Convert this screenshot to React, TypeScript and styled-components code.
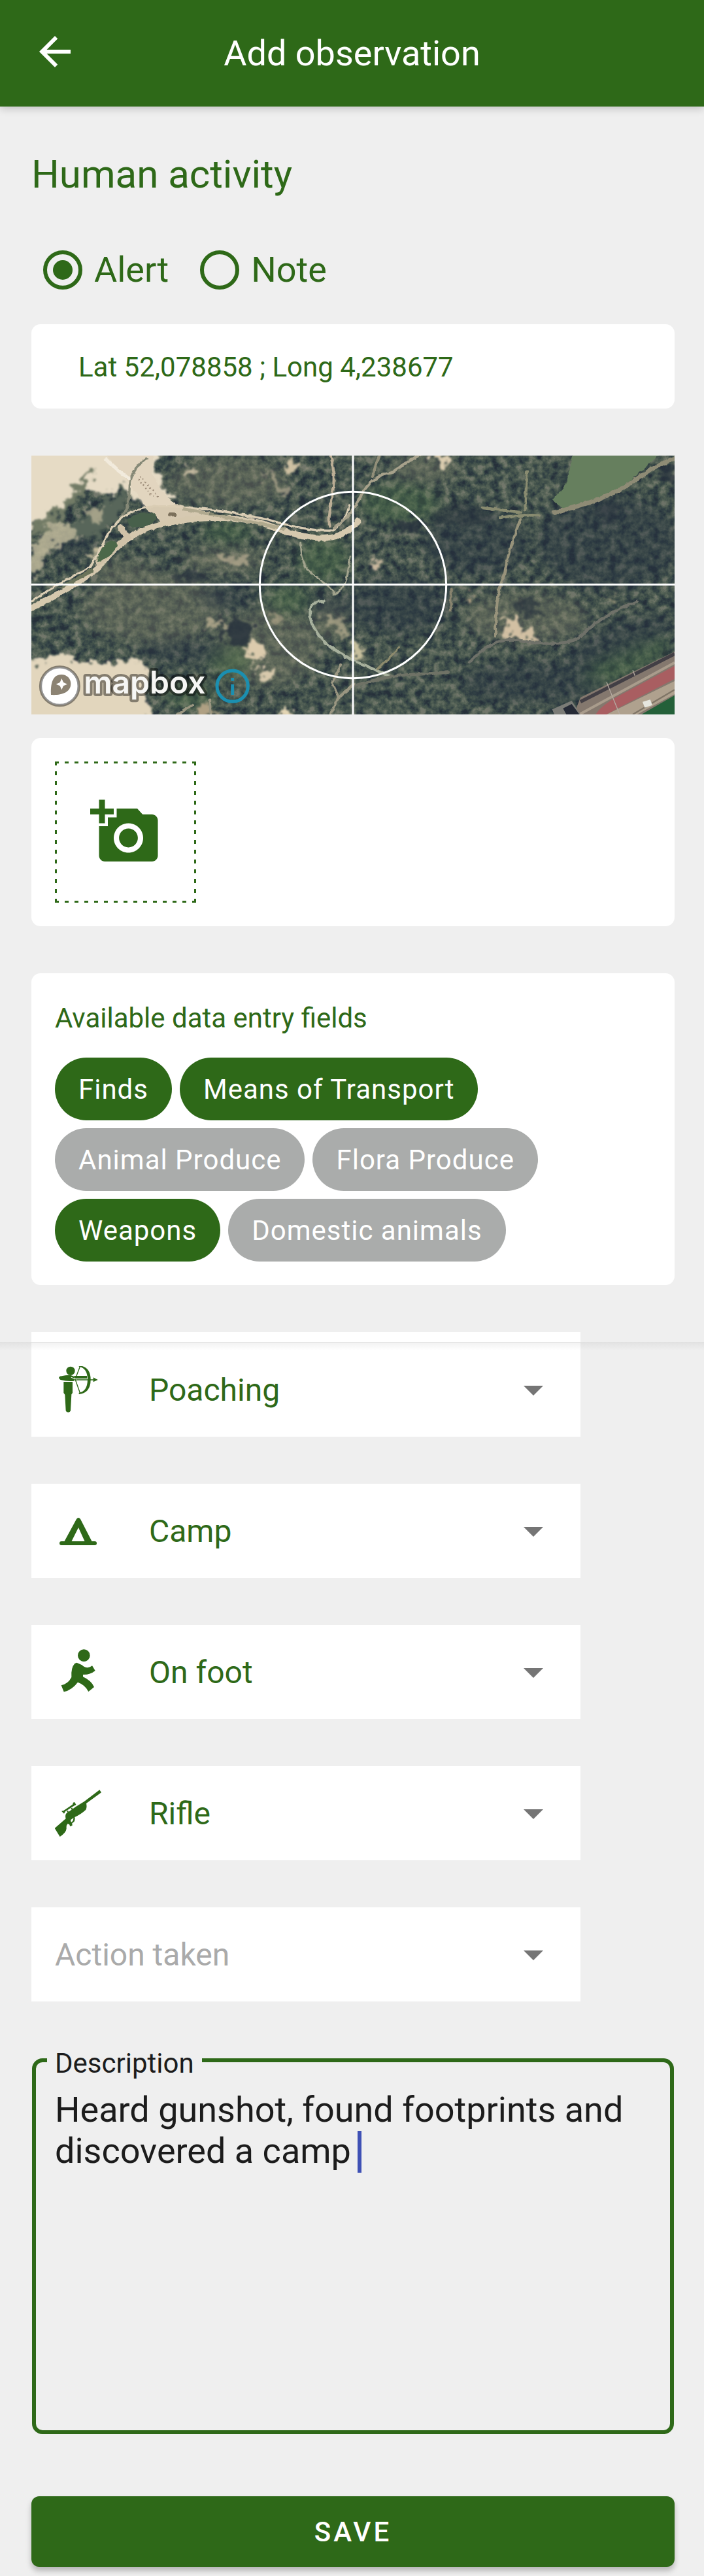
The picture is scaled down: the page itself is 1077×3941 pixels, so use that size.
import React from "react";
import styled, { createGlobalStyle } from "styled-components";
import { MdAddAPhoto, MdArrowBack, MdArrowDropDown } from "react-icons/md";

const green = "#2e6918";
const grey = "#aaacab";
const page = "#efefef";

const GlobalStyle = createGlobalStyle`
  *, *::before, *::after { box-sizing: border-box; }
  body {
    margin: 0;
    background: ${page};
    color: ${green};
    font-family: Roboto, "Liberation Sans", sans-serif;
  }
  button, select, textarea { font-family: inherit; }
`;

const Header = styled.header`
  display: grid;
  grid-template-columns: 72px 1fr 72px;
  align-items: start;
  padding: 43px 48px;
  background: ${green};
  color: #fff;
  box-shadow: 0 3px 12px rgba(0, 0, 0, 0.2);
`;

const BackButton = styled.button`
  display: flex;
  padding: 0;
  border: 0;
  background: none;
  color: inherit;
  font-size: 72px;
  cursor: pointer;
`;

const HeaderTitle = styled.h1`
  margin: 0;
  font-size: 54px;
  font-weight: 400;
  line-height: 77px;
  text-align: center;
`;

const Form = styled.form`
  display: flex;
  flex-direction: column;
  padding: 68px 45px 14px 48px;
`;

const SectionTitle = styled.h2`
  margin: 0 0 78px;
  font-size: 60px;
  font-weight: 400;
  line-height: 72px;
`;

const RadioRow = styled.div`
  display: flex;
  gap: 48px;
  margin: 0 18px 51px;
`;

const RadioLabel = styled.label`
  display: flex;
  align-items: center;
  gap: 18px;
  font-size: 54px;
  line-height: 64px;
`;

const Radio = styled.input`
  appearance: none;
  display: grid;
  place-items: center;
  width: 60px;
  height: 60px;
  margin: 0;
  border: 6px solid ${green};
  border-radius: 50%;

  &:checked::before {
    content: "";
    width: 30px;
    height: 30px;
    border-radius: 50%;
    background: ${green};
  }
`;

const Card = styled.section`
  border-radius: 14px;
  background: #fff;
`;

const LocationCard = styled(Card)`
  padding: 42px 72px 39px;
  font-size: 42px;
  line-height: 48px;
`;

const MapFrame = styled.figure`
  position: relative;
  margin: 72px 0 36px;
  aspect-ratio: 984 / 396;
  overflow: hidden;
  background: #45544b;

  svg {
    display: block;
    width: 100%;
    height: 100%;
  }
`;

const PhotoCard = styled(Card)`
  padding: 36px;
`;

const AddPhoto = styled.button`
  display: flex;
  align-items: center;
  justify-content: center;
  width: 216px;
  height: 216px;
  padding: 0;
  border: 0;
  color: ${green};
  font-size: 108px;
  cursor: pointer;
  background:
    repeating-linear-gradient(90deg, ${green} 0 6px, transparent 6px 15px) 0 0 / 100% 3px no-repeat,
    repeating-linear-gradient(90deg, ${green} 0 6px, transparent 6px 15px) 0 100% / 100% 3px no-repeat,
    repeating-linear-gradient(180deg, ${green} 0 6px, transparent 6px 15px) 0 0 / 3px 100% no-repeat,
    repeating-linear-gradient(180deg, ${green} 0 6px, transparent 6px 15px) 100% 0 / 3px 100% no-repeat;
`;

const FieldsCard = styled(Card)`
  margin: 72px 0;
  padding: 44px 36px 36px;
`;

const FieldsTitle = styled.h3`
  margin: 0 0 36px;
  font-size: 42px;
  font-weight: 400;
  line-height: 49px;
`;

const Chips = styled.div`
  display: flex;
  flex-wrap: wrap;
  gap: 12px;
`;

const Chip = styled.button<{ $on: boolean }>`
  height: 96px;
  padding: 0 36px;
  border: 0;
  border-radius: 48px;
  background: ${(p) => (p.$on ? green : grey)};
  color: #fff;
  font-size: 42px;
  letter-spacing: 1px;
  cursor: pointer;
`;

const SelectList = styled.div`
  display: flex;
  flex-direction: column;
  align-items: flex-start;
  gap: 72px;
`;

const CardPeek = styled.div`
  width: 840px;
  max-width: 100%;
  height: 15px;
  background: #fff;
`;

const Seam = styled.div`
  position: relative;
  height: 1px;
  margin: 0 -45px 0 -48px;
  background: #e0e0e0;

  &::after {
    content: "";
    position: absolute;
    inset: 1px 0 auto;
    height: 12px;
    background: linear-gradient(rgba(0, 0, 0, 0.05), rgba(0, 0, 0, 0));
    pointer-events: none;
  }
`;

const SelectCard = styled.label`
  display: flex;
  align-items: center;
  width: 840px;
  max-width: 100%;
  height: 144px;
  padding: 0 36px;
  background: #fff;
`;

const SelectIcon = styled.svg`
  flex: none;
  width: 72px;
  height: 72px;
  margin-right: 72px;
`;

const Select = styled.select<{ $empty: boolean }>`
  appearance: none;
  flex: 1;
  min-width: 0;
  height: 100%;
  padding: 0;
  border: 0;
  background: none;
  color: ${(p) => (p.$empty ? "#aaaaaa" : green)};
  font-size: 48px;
  opacity: 1;
`;

const DropArrow = styled(MdArrowDropDown)`
  flex: none;
  color: #757575;
  font-size: 72px;
`;

const DescriptionBox = styled.fieldset`
  position: relative;
  min-width: 0;
  margin: 60px 1px 95px;
  padding: 0 17px;
  border: 6px solid ${green};
  border-radius: 16px;
  color: #1c1c1c;
`;

const Legend = styled.legend`
  padding: 10px 12px 0;
  font-size: 42px;
  line-height: 49px;
`;

const Description = styled.textarea`
  display: block;
  width: 100%;
  height: 537px;
  padding: 15px 12px;
  border: 0;
  outline: 0;
  resize: none;
  background: none;
  color: inherit;
  font-size: 54px;
  line-height: 63px;
`;

const Caret = styled.span`
  position: absolute;
  top: 79px;
  left: 492px;
  width: 6px;
  height: 64px;
  background: #3f51b5;
`;

const SaveButton = styled.button`
  height: 108px;
  border: 0;
  border-radius: 12px;
  background: ${green};
  color: #fff;
  font-size: 42px;
  font-weight: 500;
  letter-spacing: 4px;
  box-shadow: 0 6px 9px rgba(0, 0, 0, 0.24);
  cursor: pointer;
`;

function AerialMap() {
  return (
    <svg viewBox="0 0 2952 1188" preserveAspectRatio="xMidYMid slice" role="img" aria-label="Satellite map">
      <defs>
        <filter id="canopy" x="0" y="0" width="100%" height="100%" colorInterpolationFilters="sRGB">
          <feTurbulence type="fractalNoise" baseFrequency="0.026" numOctaves="5" seed="8" />
          <feColorMatrix values="1.9 0 0 0 -0.45  1.9 0 0 0 -0.45  1.9 0 0 0 -0.45  0 0 0 0 1" />
          <feComponentTransfer>
            <feFuncR type="table" tableValues=".15 .20 .27 .35 .45" />
            <feFuncG type="table" tableValues=".19 .26 .33 .40 .47" />
            <feFuncB type="table" tableValues=".23 .27 .30 .35 .42" />
          </feComponentTransfer>
        </filter>
        <filter id="rough" x="-10%" y="-10%" width="120%" height="120%" colorInterpolationFilters="sRGB">
          <feTurbulence type="fractalNoise" baseFrequency="0.025" numOctaves="5" seed="3" result="n" />
          <feDisplacementMap in="SourceGraphic" in2="n" scale="110" xChannelSelector="R" yChannelSelector="G" />
          <feGaussianBlur stdDeviation="4" />
        </filter>
        <filter id="tint" x="-30%" y="-30%" width="160%" height="160%" colorInterpolationFilters="sRGB">
          <feGaussianBlur stdDeviation="28" />
        </filter>
        <filter id="edge" colorInterpolationFilters="sRGB">
          <feTurbulence type="fractalNoise" baseFrequency="0.04" numOctaves="2" seed="5" result="n" />
          <feDisplacementMap in="SourceGraphic" in2="n" scale="14" xChannelSelector="R" yChannelSelector="G" />
          <feGaussianBlur stdDeviation="2" />
        </filter>
      </defs>

      <rect width="2952" height="1188" filter="url(#canopy)" />

      <g filter="url(#tint)">
        <g fill="#7b7c68" opacity=".42">
          <ellipse cx="900" cy="120" rx="280" ry="110" />
          <ellipse cx="560" cy="700" rx="330" ry="160" />
          <ellipse cx="1080" cy="880" rx="240" ry="180" />
          <ellipse cx="880" cy="480" rx="190" ry="60" />
          <ellipse cx="430" cy="540" rx="140" ry="60" />
          <ellipse cx="2270" cy="740" rx="280" ry="110" />
          <ellipse cx="1800" cy="60" rx="160" ry="60" />
          <ellipse cx="1370" cy="760" rx="80" ry="90" />
        </g>
        <g fill="#4c7048" opacity=".4">
          <ellipse cx="900" cy="350" rx="120" ry="50" />
          <ellipse cx="1340" cy="480" rx="120" ry="100" />
          <ellipse cx="910" cy="940" rx="100" ry="80" />
          <ellipse cx="1180" cy="660" rx="100" ry="70" />
          <ellipse cx="730" cy="1100" rx="120" ry="60" />
          <ellipse cx="1690" cy="220" rx="180" ry="90" />
          <ellipse cx="2720" cy="950" rx="230" ry="70" transform="rotate(-25 2720 950)" />
        </g>
        <g fill="#263240" opacity=".42">
          <ellipse cx="2040" cy="400" rx="240" ry="150" />
          <ellipse cx="2650" cy="400" rx="330" ry="220" />
          <ellipse cx="2300" cy="1040" rx="330" ry="100" />
          <ellipse cx="1680" cy="690" rx="240" ry="130" />
          <ellipse cx="2700" cy="850" rx="260" ry="80" transform="rotate(-20 2700 850)" />
          <ellipse cx="900" cy="650" rx="130" ry="60" />
          <ellipse cx="1380" cy="690" rx="120" ry="40" />
          <ellipse cx="700" cy="900" rx="220" ry="50" />
          <ellipse cx="190" cy="410" rx="110" ry="50" />
        </g>
      </g>

      <g filter="url(#rough)" fill="#28323d">
        <path d="M880 780l60-30 70 20 15 60-60 35-85-25z" opacity=".85" />
        <path d="M650 560l90-30 80 20v30H650z" opacity=".6" />
        <path d="M1660 310l80-30 60 20-10 40-120 20z" opacity=".75" />
        <path d="M1850 260l90-50 130 20 40 70-90 20-170-20z" opacity=".4" />
        <path d="M2230 670l60-20 60 30-20 45-90 5z" opacity=".65" />
        <path d="M2870 40l90 10v70l-80-10z" opacity=".7" />
        <path d="M2560 270l80-60 100 40-60 60z" opacity=".5" />
      </g>

      <g filter="url(#rough)">
        <path d="M-80-80H590L570 60l70 130-90 60-100-60-20-50-130 60-50-80L140 250-80 380z" fill="#e6dbc5" />
        <path d="M-60 400L180 180 280 70 260 150 110 290-60 440z" fill="#727b66" />
        <path d="M350 210l90-60-30 120-80 90-120 10-30-60 90-30z" fill="#58665a" />
        <path d="M70 310l60-20 50 50 60 40-110 20-60 50-30 90-60 10 20-110z" fill="#c6be9f" opacity=".8" />
        <path d="M240 240l90 10 10 30-60 30z" fill="#b6b093" opacity=".8" />
        <path d="M250 450l60-10-20 40z" fill="#c9bf9f" />
        <path d="M-80 920l130 20 70-50 90 40 100 30 140-30 90 60-10 110 20 160H-80z" fill="#e2d6bd" />
        <path d="M980 865l80 5 10 50-40 45-30-20z" fill="#dccbad" />
        <path d="M1050 990l60-10 10 40-60 5z" fill="#d8c9ac" />
        <path d="M1130 1210l35-60 60 60z" fill="#e4d6b5" />
        <path d="M820 460l160 0 10 40-90 5z" fill="#b1a78d" opacity=".8" />
        <path d="M710 50l50 0 10 30-50 10z" fill="#c6baa0" />
        <path d="M1160 35l80 0-10 35-40 5z" fill="#cec0a2" />
        <path d="M1050 70l60 20 70 60-20 30z" fill="#a9a18a" opacity=".8" />
        <path d="M1840-10h60l20 40-40 20z" fill="#dccdb0" />
        <path d="M1540 480l70 0 10 25-50 0z" fill="#cbb99f" />
        <path d="M2160 720l30 10 30 50 80 20 30 50-120-10-50 5 30-50z" fill="#d2c0a3" />
        <path d="M2000 640l40 0-10 30z" fill="#b9a686" />
        <path d="M2630 640l70 0-20 40z" fill="#b3a788" opacity=".7" />
        <path d="M1330 730l80 10 60 80-30 10-80-60z" fill="#b3ab8d" opacity=".7" />
        <path d="M1470 870l60 10 0 40-60 20z" fill="#c7bf9c" />
        <path d="M750 1140l80 0-20 60-50 0z" fill="#afa083" />
        <path d="M830 750l60 10-10 30-90 10z" fill="#b8ac90" opacity=".8" />
        <path d="M1100 710l60 50-20 30-50-40z" fill="#aaa084" opacity=".7" />
      </g>

      <g filter="url(#edge)">
        <path d="M2490-20H2900L2800 70Q2720 150 2610 190L2440 245 2390 205 2455 130z" fill="#667f5e" />
        <path d="M330-20H560L555 80 590 150 665 225 600 310 530 240 440 115z" fill="#e2d5bf" />
        <path d="M520 235L680 225 820 260 800 290 600 310z" fill="#d6c9b1" />
        <g fill="none" strokeLinecap="round">
          <path d="M2400 260Q2640 205 2760 120T2960 10" stroke="#8e8b75" strokeWidth="20" />
          <path d="M340 15Q380 60 450 105" stroke="#f2ebdd" strokeWidth="16" />
          <path d="M530 10Q450 70 450 160T410 280" stroke="#858876" strokeWidth="10" />
          <path d="M-20 710Q230 585 310 510C390 410 480 335 620 310C790 275 980 280 1090 320C1220 375 1340 390 1400 370Q1460 350 1500 300" stroke="#d5c8ae" strokeWidth="27" />
          <path d="M-20 680Q180 555 270 510C330 420 340 360 390 310Q430 260 540 235C700 225 880 250 1090 295Q1260 345 1370 345Q1430 325 1460 230" stroke="#dacdb4" strokeWidth="10" />
          <path d="M410 330L440 375 310 490" stroke="#d0c2a8" strokeWidth="30" />
          <path d="M700 245L1160 335" stroke="#a09b80" strokeWidth="15" opacity=".7" />
          <path d="M1370-10Q1400 80 1380 190T1370 325" stroke="#bcae96" strokeWidth="12" />
          <path d="M1390 330Q1460 290 1510 190T1650 80L1790-10" stroke="#a7a18b" strokeWidth="13" />
          <path d="M1565 95L1600-10" stroke="#928f79" strokeWidth="14" />
          <path d="M1235 400Q1230 510 1310 560T1390 640Q1440 610 1450 550L1465 460" stroke="#a2a38d" strokeWidth="9" />
          <path d="M1340 670C1270 660 1260 740 1310 810Q1350 880 1480 940L1650 1015" stroke="#a7b09c" strokeWidth="12" />
          <path d="M1470 1060Q1630 1010 1740 1005T1910 995" stroke="#6f7266" strokeWidth="14" />
          <path d="M1690 880L1590 980" stroke="#8e8b6d" strokeWidth="10" />
          <path d="M2275 70L2265 250M2070 240L2250 260M2150 285Q2270 270 2330 275" stroke="#898b70" strokeWidth="13" />
          <path d="M2245 290Q2190 430 2170 550Q2130 630 2130 830" stroke="#98937b" strokeWidth="12" />
          <path d="M2010 950Q2130 820 2250 850Q2420 880 2510 840Q2600 740 2780 670" stroke="#6f7169" strokeWidth="13" />
          <path d="M1925 610V710" stroke="#89846f" strokeWidth="12" />
          <path d="M1370 1190L1410 1110 1480 1050M1410 1110L1380 1040 1420 960M820 1120V1190M670 1190L740 1145" stroke="#9a9681" strokeWidth="11" />
        </g>
        <path d="M445 290Q480 255 570 268Q585 310 500 330Q430 330 445 290z" fill="#48604b" />
        <path d="M300 490Q320 390 380 390Q420 410 340 475z" fill="#4c6849" />
        <path d="M120 610L280 515 285 535 140 610z" fill="#6a735a" />
        <ellipse cx="647" cy="270" rx="20" ry="9" fill="#7b705b" />
        <path d="M500 95l80 95M490 110l70 80" stroke="#9b8a77" strokeWidth="7" strokeDasharray="6 11" />
      </g>

      <path d="M2490 1188L2520 1110 2952 900V1188z" fill="#84786e" />
      <path d="M2520 1130L2952 910" stroke="#423f45" strokeWidth="16" />
      <path d="M2515 1188L2952 950" stroke="#a99c8c" strokeWidth="12" />
      <path d="M2590 1188Q2620 1140 2720 1090L2952 965V1025L2690 1160 2640 1188z" fill="#a95e61" />
      <path d="M2640 1188L2952 1035V1095L2780 1188z" fill="#afa18e" />
      <path d="M2760 1188L2952 1075" stroke="#7f7566" strokeWidth="7" />
      <path d="M2800 1188L2952 1100V1188z" fill="#246039" />
      <path d="M2640 1040L2700 1188M2760 985L2770 1010" stroke="#b4aaa1" strokeWidth="4" />
      <path d="M2805 1130l35-10 10 25-35 12z" fill="#e6e6df" />
      <path d="M2390 1165l90-40 40 63H2400z" fill="#7b7c77" />
      <path d="M2440 1160l40-20 35 48h-60z" fill="#252a36" />

      <g fill="none" stroke="#fff" strokeWidth="9">
        <circle cx="1476" cy="594" r="428" />
        <path d="M0 592H2952M1476 0V1188" />
      </g>

      <circle cx="130" cy="1058" r="88" fill="#fff" stroke="#000" strokeOpacity=".42" strokeWidth="13" />
      <path d="M90 1098C87 1050 96 1005 138 1005C163 1005 181 1024 181 1047C181 1090 132 1101 90 1098z" fill="#8c8373" />
      <path d="M139 1023L147 1041 165 1049 147 1057 139 1075 131 1057 113 1049 131 1041z" fill="#fff" />
      <text
        x="241"
        y="1092"
        fill="#f6f6f4"
        stroke="#000"
        strokeOpacity=".42"
        strokeWidth="24"
        strokeLinejoin="round"
        paintOrder="stroke"
        fontFamily="Inter, sans-serif"
        fontWeight="600"
        fontSize="144"
      >
        mapbox
      </text>
      <g stroke="#1b8fb0" fill="none" strokeWidth="15">
        <circle cx="923" cy="1058" r="71" />
        <path d="M923 1050V1098M923 1020V1034" />
      </g>
    </svg>
  );
}

const PoachingIcon = () => (
  <SelectIcon viewBox="72 60 216 216" fill={green} aria-hidden="true">
    <circle cx="144" cy="82" r="20" />
    <path d="M104 106Q126 99 145 102L161 108 160 128Q130 131 98 123Q88 116 91 110Q95 106 104 106z" />
    <path d="M160 105H219V117H162z" />
    <path d="M112 132H153V183L148 190 144 265Q142 272 133 272Q124 272 122 265L118 191 112 183z" />
    <path d="M182 57Q236 62 236 122Q236 183 182 189V182Q221 176 222 122Q221 68 182 62z" />
    <path d="M188 60L165 120L188 185M160 123H252" fill="none" stroke={green} strokeWidth="4" />
    <path d="M248 112L269 123 248 133z" />
    <path d="M146 112l26 8" stroke="#fff" strokeWidth="3" />
  </SelectIcon>
);

const CampIcon = () => (
  <SelectIcon viewBox="0 0 72 72" fill={green} fillRule="evenodd" aria-hidden="true">
    <path d="M33 18Q36 14 39 18L57 53H14zM36 31L25 53H46z" />
    <rect x="7" y="52" width="57" height="6" rx="3" />
  </SelectIcon>
);

const OnFootIcon = () => (
  <SelectIcon viewBox="72 96 216 216" fill={green} aria-hidden="true">
    <circle cx="205" cy="128" r="28" />
    <path d="M172 161L196 172Q208 184 222 184Q234 182 243 175L257 198Q234 217 201 216V226Q239 243 252 273L226 294Q211 263 177 251Q150 287 113 295L101 265Q133 258 148 228Q145 184 163 165z" />
  </SelectIcon>
);

const RifleIcon = () => (
  <SelectIcon viewBox="42 84 216 216" fill={green} fillRule="evenodd" aria-hidden="true">
    <path d="M247 85L255 97 186 147Q190 166 184 176Q164 195 133 210Q136 222 130 232L121 238 122 248 112 253 108 243 100 241Q94 247 95 263Q93 281 65 300L41 261 92 217Q88 205 93 194L137 163 177 138zM127 214L115 222Q113 230 118 233Q127 228 127 214z" />
    <path d="M72 182L81 181 123 152 126 143 132 141 140 154 132 157 90 184 84 194z" />
    <path d="M99 181l5 9M118 168l5 9" stroke={green} strokeWidth="6" />
  </SelectIcon>
);

const chips = [
  { name: "Finds", on: true },
  { name: "Means of Transport", on: true },
  { name: "Animal Produce", on: false },
  { name: "Flora Produce", on: false },
  { name: "Weapons", on: true },
  { name: "Domestic animals", on: false },
];

const selects = [
  { label: "Activity", value: "Poaching", Icon: PoachingIcon },
  { label: "Find", value: "Camp", Icon: CampIcon },
  { label: "Means of transport", value: "On foot", Icon: OnFootIcon },
  { label: "Weapon", value: "Rifle", Icon: RifleIcon },
  { label: "Action", value: "Action taken", Icon: null },
];

export default function App() {
  return (
    <>
      <GlobalStyle />
      <Header>
        <BackButton type="button" aria-label="Back">
          <MdArrowBack />
        </BackButton>
        <HeaderTitle>Add observation</HeaderTitle>
      </Header>
      <Form onSubmit={(e) => e.preventDefault()}>
        <SectionTitle>Human activity</SectionTitle>
        <RadioRow role="radiogroup" aria-label="Type">
          <RadioLabel>
            <Radio type="radio" name="type" defaultChecked />
            Alert
          </RadioLabel>
          <RadioLabel>
            <Radio type="radio" name="type" />
            Note
          </RadioLabel>
        </RadioRow>

        <LocationCard>Lat 52,078858 ; Long 4,238677</LocationCard>
        <MapFrame>
          <AerialMap />
        </MapFrame>
        <PhotoCard>
          <AddPhoto type="button" aria-label="Add photo">
            <MdAddAPhoto />
          </AddPhoto>
        </PhotoCard>

        <FieldsCard>
          <FieldsTitle>Available data entry fields</FieldsTitle>
          <Chips>
            {chips.map((c) => (
              <Chip key={c.name} type="button" $on={c.on} aria-pressed={c.on}>
                {c.name}
              </Chip>
            ))}
          </Chips>
        </FieldsCard>

        <CardPeek />
        <Seam />
        <SelectList>
          {selects.map(({ label, value, Icon }) => (
            <SelectCard key={label}>
              {Icon && <Icon />}
              <Select aria-label={label} $empty={!Icon} defaultValue={value}>
                <option>{value}</option>
              </Select>
              <DropArrow aria-hidden="true" />
            </SelectCard>
          ))}
        </SelectList>

        <DescriptionBox>
          <Legend>
            <label htmlFor="description">Description</label>
          </Legend>
          <Description id="description" defaultValue="Heard gunshot, found footprints and discovered a camp " />
          <Caret aria-hidden="true" />
        </DescriptionBox>

        <SaveButton type="submit">SAVE</SaveButton>
      </Form>
    </>
  );
}
